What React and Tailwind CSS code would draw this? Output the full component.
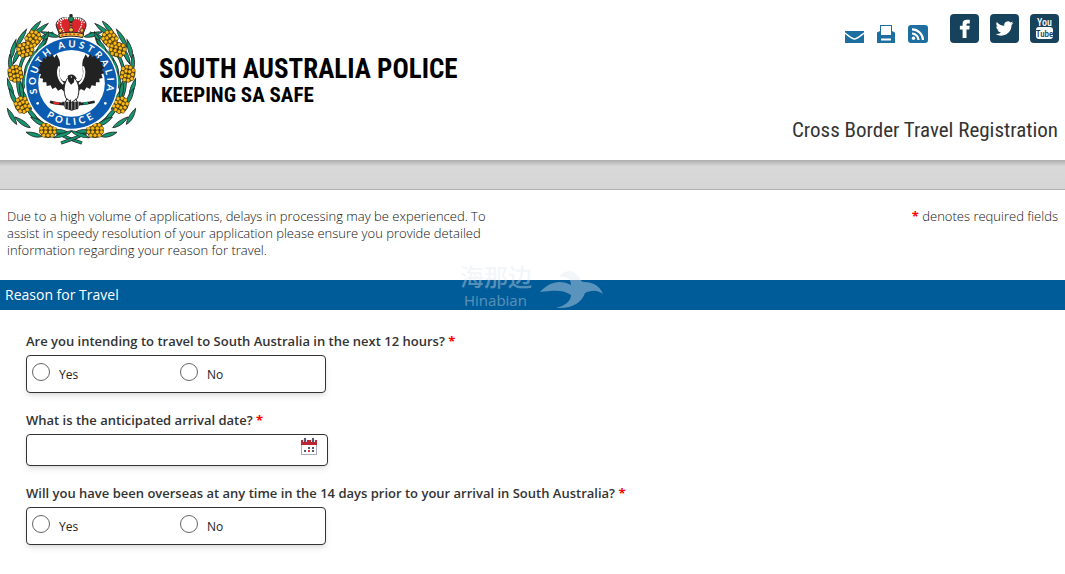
import React, { useState } from 'react';

// [x, y, rotation] for each bunch of wattle on the left branch
const bunches = [
  [100, 101, -50],
  [76, 134, -15],
  [46, 206, 80],
  [67, 300, 60],
  [144, 376, 0],
];

// [x, y, rotation, length] for each leaf on the left branch
const leaves = [
  [150, 88, -165, 56], [136, 106, -70, 56], [120, 76, -40, 64], [104, 70, -50, 56],
  [124, 124, -55, 60], [64, 100, -60, 64], [98, 158, -60, 60], [40, 134, -75, 64],
  [52, 150, -65, 60], [82, 190, -75, 60], [32, 176, -95, 56], [74, 226, -80, 60],
  [32, 248, -110, 60], [66, 258, -100, 60], [40, 276, -115, 56], [82, 286, -115, 60],
  [36, 334, -120, 56], [96, 326, -130, 60], [68, 352, -145, 56], [116, 350, -150, 56],
  [102, 388, 195, 50], [188, 388, 160, 60], [176, 378, 185, 50],
];

const dots = [
  [-11, -16], [0, -16], [11, -16], [-17, -6], [-6, -6], [6, -6], [17, -6],
  [-17, 5], [-6, 5], [6, 5], [17, 5], [-11, 15], [0, 15], [11, 15],
];

const Branch = () => (
  <g>
    <path d="M160 84 C110 96 64 140 54 215 C47 290 104 370 246 414" fill="none" stroke="#222" strokeWidth="10" />
    <path d="M160 84 C110 96 64 140 54 215 C47 290 104 370 246 414" fill="none" stroke="#14956f" strokeWidth="6" />
    {leaves.map(([x, y, r, l], i) => (
      <path
        key={i}
        d="M0 0 C12 -9 28 -9 44 0 C30 6 12 7 0 0Z"
        transform={`translate(${x} ${y}) rotate(${r}) scale(${l / 44} 1) translate(-22 0)`}
        fill="#14956f"
        stroke="#222"
        strokeWidth="2"
      />
    ))}
    {bunches.map(([x, y, r], i) => (
      <g key={i} transform={`translate(${x} ${y}) rotate(${r})`}>
        <ellipse rx="26" ry="23" fill="#3b3415" />
        {dots.map(([dx, dy], j) => (
          <circle key={j} cx={dx * 1.15} cy={dy} r="6" fill="#fdb813" stroke="#3b3415" strokeWidth="1.5" />
        ))}
      </g>
    ))}
  </g>
);

const Wing = () => (
  <g>
    <path
      d="M199 226 C190 232 184 228 178 216 C172 200 182 184 176 164 L168 148 L161 158 L154 146 L148 157 L139 150 L136 162 L126 158 L126 170 L116 171 L120 181 L112 187 L119 194 L112 204 L121 208 L117 219 L127 221 L126 232 L137 232 L138 243 L150 241 L155 252 L165 247 L172 257 L182 252 L191 260 L201 248Z"
      fill="#222"
    />
    <path d="M176 184 C168 200 172 224 188 237" fill="none" stroke="#fff" strokeWidth="6" />
  </g>
);

const Emblem = () => (
  <svg viewBox="0 0 435 435" className="w-[145px] h-[145px] shrink-0" role="img" aria-label="South Australia Police emblem">
    <Branch />
    <g transform="translate(429 0) scale(-1 1)"><Branch /></g>

    <circle cx="214.500" cy="235" r="140" fill="#fff" />
    <circle cx="214.500" cy="235" r="136" fill="#0b5cb0" />
    <circle cx="214.500" cy="235" r="100" fill="#fff" />
    <defs>
      <path id="ring-top" d="M139 310 A107 107 0 1 1 290 310" />
      <path id="ring-bottom" d="M104 294 A126 126 0 0 0 325 294" />
    </defs>
    <g fill="#fff" fontFamily="Lato, 'Open Sans', sans-serif" fontWeight="700" fontSize="29" textAnchor="middle">
      <text letterSpacing="9"><textPath href="#ring-top" startOffset="50%">SOUTH AUSTRALIA</textPath></text>
      <text letterSpacing="10"><textPath href="#ring-bottom" startOffset="50%">POLICE</textPath></text>
    </g>
    <circle cx="113" cy="295" r="4" fill="#fff" />
    <circle cx="316" cy="295" r="4" fill="#fff" />

    {/* Piping shrike */}
    <g transform="translate(2 0)">
      <Wing />
      <g transform="translate(423 0) scale(-1 1)"><Wing /></g>
      <path d="M148 290 C175 300 245 300 282 290" fill="none" stroke="#222" strokeWidth="8" />
      <path d="M158 293 L176 296" stroke="#e22a2a" strokeWidth="7" />
      <path d="M248 296 L262 294" stroke="#14956f" strokeWidth="7" />
      <path d="M184 290 L194 312 L204 314 L213 317 L222 314 L232 312 L241 290Z" fill="#222" />
      <path d="M193 288 V309 M203 288 V313 M213 288 V314 M223 288 V313 M233 288 V309" stroke="#ddd" strokeWidth="2" />
      <path d="M200 220 C188 240 188 262 196 280 L213 292 L230 280 C238 258 236 236 222 220Z" fill="#fff" stroke="#222" strokeWidth="3" />
      <path d="M201 214 C204 207 217 206 223 213 L229 222 L221 221 L220 232 L211 239 L203 229Z" fill="#222" />
      <circle cx="212" cy="216" r="2" fill="#fff" />
      <path d="M199 281 L194 291 M210 284 L207 294 M225 281 L230 291" stroke="#222" strokeWidth="3" />
    </g>

    {/* Crown */}
    <g transform="translate(4 0)">
      <path d="M175 91 C170 72 158 61 169 48 C179 35 198 37 209 44 C220 37 240 35 250 48 C260 61 249 72 244 91Z" fill="#d9252b" stroke="#222" strokeWidth="3" />
      <path d="M168 56 C174 38 196 36 209 44 C222 36 244 38 250 56 M209 43 C186 36 174 45 179 62 C182 73 190 78 187 88 M209 43 C233 36 245 45 240 62 C237 73 229 78 232 88" fill="none" stroke="#fff" strokeWidth="4" strokeDasharray="4 3" />
      <path d="M209 44 V85" stroke="#222" strokeWidth="7" />
      <path d="M209 46 V84" stroke="#f5c33b" strokeWidth="3" strokeDasharray="5 3" />
      <circle cx="209" cy="42" r="8" fill="#168f5c" stroke="#222" strokeWidth="2" />
      <path d="M209 27 V37 M204 31 H214" stroke="#222" strokeWidth="5" />
      <path d="M170 75 L178 70 L183 77 L177 83Z M248 75 L241 70 L236 77 L242 83Z M201 75 L209 67 L218 75 L209 82Z" fill="#f5c33b" stroke="#222" strokeWidth="2" />
      <path d="M172 87 C194 80 224 80 247 87 L244 98 C224 92 194 92 175 98Z" fill="#f5c33b" stroke="#222" strokeWidth="3" />
      <path d="M180 91 C200 86 219 86 239 91" fill="none" stroke="#d9252b" strokeWidth="4" strokeDasharray="6 6" />
    </g>
  </svg>
);

const MailIcon = () => (
  <svg viewBox="0 0 19 12" className="w-[19px] h-3">
    <rect width="19" height="12" fill="#1d6f9f" />
    <path d="M0 2 C4 5 7 8 9.500 8 S15 5 19 2" fill="none" stroke="#fff" strokeWidth="1.500" />
  </svg>
);

const PrintIcon = () => (
  <svg viewBox="0 0 18 18" className="w-[18px] h-[18px]">
    <path d="M0 7.500 L3 6 V0 H15 V6 L18 7.500 V18 H0Z" fill="#1d6f9f" />
    <path d="M4 1 H14 V10 H4Z M4 13.500 H14 V15.500 H4Z" fill="#fff" />
  </svg>
);

const RssIcon = () => (
  <svg viewBox="0 0 20 18" className="w-5 h-[18px]">
    <rect width="20" height="18" rx="3" fill="#1d6f9f" />
    <circle cx="5.500" cy="13.200" r="1.700" fill="#fff" />
    <path d="M4 8.500 A6.500 6.500 0 0 1 10.500 15 M4 4.300 A11 11 0 0 1 15 15" fill="none" stroke="#fff" strokeWidth="2.200" />
  </svg>
);

const FacebookIcon = () => (
  <svg viewBox="0 0 29 29" className="w-[29px] h-[29px]">
    <rect width="29" height="29" rx="4" fill="#17425c" />
    <path d="M12.600 24 V15.400 H9.900 V11.700 H12.600 V9.600 C12.600 7 14.200 5.800 16.600 5.800 H19.800 V9.400 H17.600 C16.800 9.400 16.500 9.800 16.500 10.600 V11.700 H19.700 L19.300 15.400 H16.500 V24Z" fill="#fff" />
  </svg>
);

const TwitterIcon = () => (
  <svg viewBox="0 0 29 29" className="w-[29px] h-[29px]">
    <rect width="29" height="29" rx="4" fill="#17425c" />
    <path
      transform="translate(5.600 5.600) scale(.74)"
      d="M23.953 4.570a10 10 0 01-2.825.775 4.958 4.958 0 002.163-2.723c-.951.555-2.005.959-3.127 1.184a4.920 4.920 0 00-8.384 4.482C7.690 8.095 4.067 6.130 1.640 3.162a4.822 4.822 0 00-.666 2.475c0 1.710.870 3.213 2.188 4.096a4.904 4.904 0 01-2.228-.616v.060a4.923 4.923 0 003.946 4.827 4.996 4.996 0 01-2.212.085 4.936 4.936 0 004.604 3.417 9.867 9.867 0 01-6.102 2.105c-.390 0-.779-.023-1.170-.067a13.995 13.995 0 007.557 2.209c9.053 0 13.998-7.496 13.998-13.985 0-.210 0-.420-.015-.630A9.935 9.935 0 0024 4.590z"
      fill="#fff"
    />
  </svg>
);

const YoutubeIcon = () => (
  <svg viewBox="0 0 29 29" className="w-[29px] h-[29px]">
    <rect width="29" height="29" rx="4" fill="#17425c" />
    <rect x="6" y="13" width="17" height="12" rx="3" fill="#fff" />
    <g fontFamily="'Roboto Condensed', 'Liberation Sans Narrow', sans-serif" fontWeight="500" fontSize="10" textAnchor="middle">
      <text x="14.500" y="12" fill="#fff">You</text>
      <text x="14.500" y="22.500" fill="#17425c" fontSize="9">Tube</text>
    </g>
  </svg>
);

const CalendarIcon = () => (
  <svg viewBox="0 0 16 17" className="w-4 h-[17px]">
    <rect x=".5" y="3" width="15" height="13.500" fill="#fff" stroke="#a9a9c0" />
    <path d="M0 2 H16 V7 H0Z" fill="#bb2731" />
    <path d="M2 1 H6 V4 H2Z M10 1 H14 V4 H10Z" fill="#e6e6f0" />
    <path d="M4 0 V4 M12 0 V4" stroke="#56566e" strokeWidth="2" />
    <path d="M7 9 H9 V11 H7Z M11 9 H13 V11 H11Z M3 12 H5 V14 H3Z M11 12 H13 V14 H11Z" fill="#56566e" />
    <path d="M7 12 H9 V14 H7Z" fill="#ee3333" />
  </svg>
);

const Watermark = () => (
  <div className="absolute left-[460px] -top-5 flex items-end text-[#e0e8ee]/40 pointer-events-none" aria-hidden="true">
    <div className="w-20 pb-1">
      <div className="font-['Noto_Sans_CJK_SC',sans-serif] text-2xl leading-8 font-medium">海那边</div>
      <div className="font-['Open_Sans',sans-serif] text-[15px] leading-4 pl-1">Hinabian</div>
    </div>
    <svg viewBox="0 0 64 42" className="w-16 h-[42px]" fill="currentColor">
      <path d="M0 22 C9 12 20 9 31 15 C31 9 27 6 19 7 C24 0 32 -1 37 5 C41 8 40 12 44 12 C53 12 60 16 63 24 C56 19 50 21 45 23 C42 32 33 39 16 38 C25 36 31 31 31 25 C22 19 12 21 0 22Z" />
    </svg>
  </div>
);

const Required = () => <span className="font-bold text-[#f00]">*</span>;

const YesNoQuestion = ({ name, question }) => {
  const [value, setValue] = useState('');

  return (
    <fieldset>
      <legend className="text-[13px] leading-5 font-semibold">{question} <Required /></legend>
      <div className="mt-1 w-[300px] h-[38px] px-[5px] flex items-start border border-[#333] rounded bg-white shadow-md">
        {['Yes', 'No'].map(option => (
          <label key={option} className="w-[148px] shrink-0 pt-[7px] flex gap-[9px] text-xs text-[#222]">
            <input
              type="radio"
              name={name}
              value={option}
              checked={value === option}
              onChange={e => setValue(e.target.value)}
              className="appearance-none w-[18px] h-[18px] rounded-full border border-[#666] bg-white checked:border-4"
            />
            <span className="pt-1">{option}</span>
          </label>
        ))}
      </div>
    </fieldset>
  );
};

const Header = () => (
  <header className="h-40 flex justify-between bg-white">
    <div className="flex pt-[5px]">
      <Emblem />
      <div className="pt-12 pl-[14px] font-['Roboto_Condensed','Liberation_Sans_Narrow',sans-serif] font-bold text-black">
        <p className="text-[27px] leading-8">SOUTH AUSTRALIA POLICE</p>
        <p className="text-[21px] leading-5 pl-0.5">KEEPING SA SAFE</p>
      </div>
    </div>
    <div className="flex flex-col justify-between items-end pt-[14px] pb-4 pr-[7px]">
      <nav className="flex items-start -mr-px">
        <div className="flex items-end h-[29px] gap-[13px] mr-[22px]">
          <a href="#email" aria-label="Email"><MailIcon /></a>
          <a href="#print" aria-label="Print"><PrintIcon /></a>
          <a href="#rss" aria-label="RSS"><RssIcon /></a>
        </div>
        <div className="flex gap-[11px]">
          <a href="#facebook" aria-label="Facebook"><FacebookIcon /></a>
          <a href="#twitter" aria-label="Twitter"><TwitterIcon /></a>
          <a href="#youtube" aria-label="YouTube"><YoutubeIcon /></a>
        </div>
      </nav>
      <h1 className="font-['Roboto_Condensed','Liberation_Sans_Narrow',sans-serif] text-[21px] leading-7 text-[#333]">
        Cross Border Travel Registration
      </h1>
    </div>
  </header>
);

const App = () => {
  const [arrival, setArrival] = useState('');

  return (
    <div className="min-h-screen bg-white text-[#333] font-['Open_Sans',sans-serif]">
      <Header />
      <div className="h-[30px] bg-[#d9d9d9] border-y border-[#b0b0b0] bg-linear-to-b from-[#b5b5b5] from-0% via-[#d9d9d9] via-20% to-[#d5d5d5]" />
      <main>
        <div className="h-[90px] pt-[18px] px-[7px] flex justify-between text-[13px] leading-[17px] font-light text-[#111]">
          <p className="w-[490px]">
            Due to a high volume of applications, delays in processing may be experienced. To
            assist in speedy resolution of your application please ensure you provide detailed
            information regarding your reason for travel.
          </p>
          <p><Required /> denotes required fields</p>
        </div>
        <div className="relative h-[30px] px-[5px] flex items-center bg-[#005b99]">
          <h2 className="text-sm text-white">Reason for Travel</h2>
          <Watermark />
        </div>
        <form className="pt-[21px] px-[26px] flex flex-col gap-[17px]">
          <YesNoQuestion name="next12" question="Are you intending to travel to South Australia in the next 12 hours?" />
          <div>
            <label htmlFor="arrival" className="block text-[13px] leading-5 font-semibold">
              What is the anticipated arrival date? <Required />
            </label>
            <div className="mt-1 w-[302px] h-8 flex items-center border border-[#333] rounded bg-white shadow-md">
              <input
                id="arrival"
                type="text"
                value={arrival}
                onChange={e => setArrival(e.target.value)}
                className="flex-1 min-w-0 px-2 text-sm outline-none"
              />
              <button type="button" aria-label="Pick a date" className="pr-[10px] pb-2"><CalendarIcon /></button>
            </div>
          </div>
          <YesNoQuestion name="overseas" question="Will you have been overseas at any time in the 14 days prior to your arrival in South Australia?" />
        </form>
      </main>
    </div>
  );
};

export default App;
